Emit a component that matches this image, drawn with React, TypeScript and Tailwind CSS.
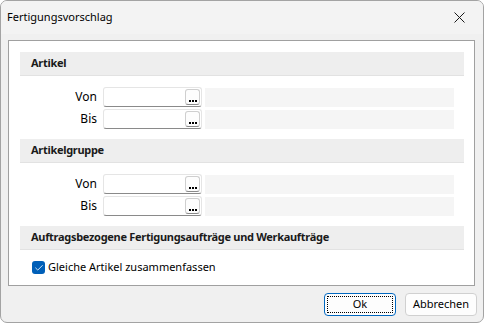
import { Check } from "lucide-react";

const font = { fontFamily: '"Noto Sans", "Liberation Sans", sans-serif' };

function SectionHeader({ title }: { title: string }) {
  return (
    <div className="h-[24px] bg-[#eeeeee] border-b border-[#e2e2e2] flex items-center pl-[11px] text-[11px] font-bold tracking-[-0.3px] text-[#1a1a1a]">
      {title}
    </div>
  );
}

function LookupRow({ label }: { label: string }) {
  return (
    <div className="flex items-center h-[20px]">
      <span className="w-[77px] text-right text-[12px] text-black">{label}</span>
      <div className="ml-[6px] w-[99px] h-[20px] bg-white border border-[#e5e5e5] border-b-[#8a8a8a] rounded-[3px] flex items-center justify-end pr-[1px]">
        <div className="w-[15px] h-[16px] border border-[#cfcfcf] border-b-[#8a8a8a] rounded-[3px] bg-[#fdfdfd] flex items-end justify-center gap-[1px] pb-[2px]">
          <span className="w-[2px] h-[2px] bg-black" />
          <span className="w-[2px] h-[2px] bg-black" />
          <span className="w-[2px] h-[2px] bg-black" />
        </div>
      </div>
      <div className="ml-[3px] w-[249px] h-[19px] bg-[#f5f5f5]" />
    </div>
  );
}

export default function App() {
  return (
    <div style={font} className="w-[484px] h-[323px] bg-[#f0f0f0] border border-[#a3a3a3] rounded-[7px] overflow-hidden flex flex-col">
      {/* Titelleiste */}
      <div className="h-[33px] bg-[#f3f3f3] flex items-center justify-between pl-[6px] pr-[18px] shrink-0">
        <span className="text-[11px] text-black">Fertigungsvorschlag</span>
        <svg width="11" height="11" viewBox="0 0 11 11" className="text-[#1a1a1a]">
          <path d="M0.5 0.5 L10.5 10.5 M10.5 0.5 L0.5 10.5" stroke="currentColor" strokeWidth="1" />
        </svg>
      </div>

      <div className="flex-1 flex flex-col pl-[7px] pr-[8px] pt-[6px]">
        <div className="h-[246px] bg-white border border-[#a0a0a0] pt-[11px] pl-[11px] pr-[10px] flex flex-col">
          <SectionHeader title="Artikel" />
          <div className="mt-[11px] flex flex-col gap-[2px]">
            <LookupRow label="Von" />
            <LookupRow label="Bis" />
          </div>

          <div className="mt-[10px]">
            <SectionHeader title="Artikelgruppe" />
          </div>
          <div className="mt-[11px] flex flex-col gap-[2px]">
            <LookupRow label="Von" />
            <LookupRow label="Bis" />
          </div>

          <div className="mt-[10px]">
            <SectionHeader title="Auftragsbezogene Fertigungsaufträge und Werkaufträge" />
          </div>
          <div className="mt-[10px] flex items-center pl-[12px] h-[15px]">
            <div className="w-[13px] h-[13px] rounded-[3px] bg-[#005fb8] flex items-center justify-center">
              <Check className="w-[10px] h-[10px] text-white" strokeWidth={2} />
            </div>
            <span className="ml-[3px] text-[11px] text-black">Gleiche Artikel zusammenfassen</span>
          </div>
        </div>

        <div className="mt-[7px] flex justify-end gap-[9px] -mr-[2px]">
          <button className="w-[72px] h-[23px] rounded-[4px] border border-[#0067c0] bg-[#fdfdfd] p-[2px]">
            <div className="w-full h-full border border-dotted border-black flex items-center justify-center text-[11px] text-black">
              Ok
            </div>
          </button>
          <button className="w-[72px] h-[23px] rounded-[4px] border border-[#d0d0d0] bg-[#fdfdfd] flex items-center justify-center text-[11px] text-black">
            Abbrechen
          </button>
        </div>
      </div>
    </div>
  );
}
